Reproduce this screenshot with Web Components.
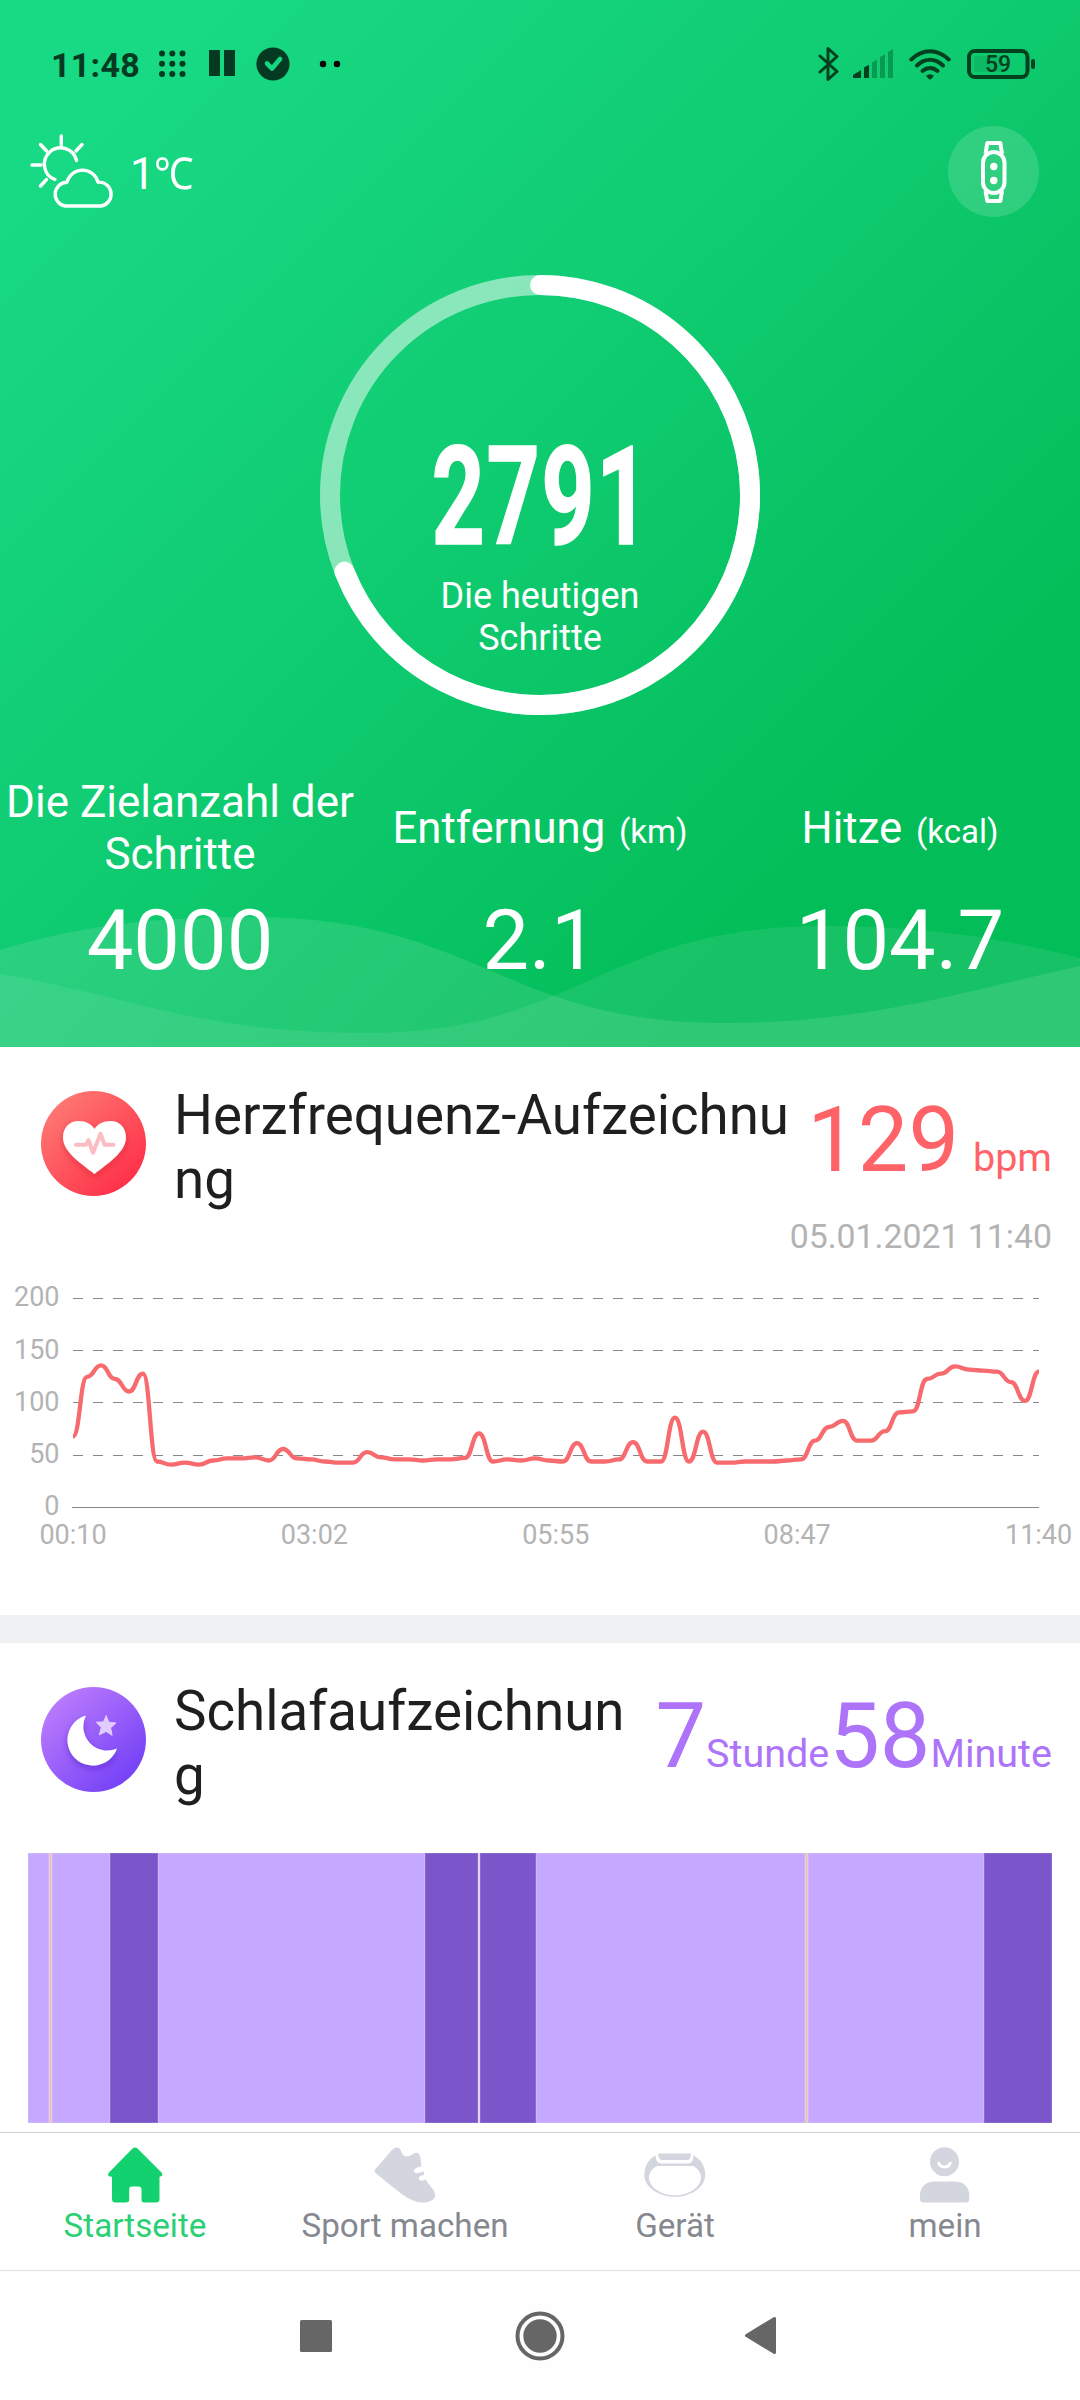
<!DOCTYPE html>
<html lang="de">
<head>
<meta charset="utf-8">
<title>Startseite</title>
<style>
  body { margin: 0; background: #fff; font-family: Roboto, "Noto Sans", sans-serif; width: 1080px; height: 2400px; overflow: hidden; }
</style>
</head>
<body>
<fitness-app></fitness-app>
<script>
const define = (name, html, setup) => customElements.define(name, class extends HTMLElement {
  connectedCallback() {
    if (this.shadowRoot) return;
    const t = document.createElement('template');
    t.innerHTML = typeof html === 'function' ? html(this) : html;
    this.attachShadow({ mode: 'open' }).append(t.content.cloneNode(true));
    if (setup) setup(this);
  }
});

const ICONS = {
  grid: [28, 28, `<g fill="#043a21">${[3.5,13.7,24].map(y => [3,13.3,23.5].map(x => `<circle cx="${x}" cy="${y}" r="3"/>`).join('')).join('')}</g>`],
  pause: [26, 26, `<path fill="#043a21" d="M0 0h11v26H0zM15 0h11v26H15z"/>`],
  check: [34, 34, `<circle cx="17" cy="17" r="16.6" fill="#043a21"/><path d="M11 16.5l5 5 8-9.5" fill="none" stroke="#17d682" stroke-width="4.6" stroke-linecap="round" stroke-linejoin="round"/>`],
  dots: [22, 8, `<circle cx="4" cy="4" r="3.2"/><circle cx="18" cy="4" r="3.2"/>`],
  bluetooth: [22, 36, `<path d="M2 10l17 15.5-9 8V2.500l9 8L2 26" fill="none" stroke="#03401f" stroke-width="3" stroke-linejoin="round" stroke-linecap="round"/>`],
  signal: [40, 30, `<path fill="#03401f" d="M0 26l8-5v8H0zM11 18.500l5-2.800V29h-5z"/><path fill="#089a50" d="M19 13.500l5-2.800V29h-5zM27 8l5-2.800V29h-5zM35 3l5-3v29h-5z"/>`],
  wifi: [42, 31, `<g fill="none" stroke="#03401f" stroke-width="4" stroke-linecap="round"><path d="M2.300 10.500Q11 2.300 21 2.300t18.700 8.200"/><path d="M8 16.500Q14 10.800 21 10.800t13 5.700"/><path d="M13.500 22Q17 19 21 19t7.500 3"/></g><path fill="#03401f" d="M17 26.800q4-3 8 0l-2.500 3q-1.500 1.200-3 0z"/>`],
  battery: [69, 30, `<rect x="2" y="2" width="58.500" height="26" rx="6" fill="none" stroke="#03401f" stroke-width="4"/><rect x="7" y="7" width="29" height="16" rx="2.500" fill="#03401f" opacity=".12"/><rect x="64" y="10" width="4" height="10" rx="2" fill="#03401f"/><text x="31" y="23.300" text-anchor="middle" font-size="23" font-weight="500" fill="#03401f" font-family="Roboto, sans-serif">59</text>`],
  weather: [84, 76, `<g fill="none" stroke="#fff" stroke-width="3.400" stroke-linecap="round" stroke-linejoin="round"><path d="M31.300 2v9M10.500 10.500l6 6.500M52 10.500l-6 6.500M2 31h9M10.500 52l6-6.500"/><path d="M46.500 26.500A16.300 16.300 0 1 0 25 45.500"/><path d="M37 48.200A16 16 0 0 1 68 48.200A12 12 0 0 1 71 72H35A12 12 0 0 1 37 48.200Z"/></g>`],
  watch: [91, 91, `<circle cx="45.500" cy="45.500" r="45.500" fill="#fff" opacity=".15"/><g fill="none" stroke="#fff" stroke-width="4" stroke-linejoin="round"><rect x="35" y="26" width="21.500" height="41" rx="10.750"/><path d="M37.500 28l1.800-11h13l1.800 11M37.500 65l1.800 10h13l1.800-10"/></g><circle cx="45.800" cy="40.500" r="3.700" fill="#fff"/><circle cx="45.800" cy="54.500" r="3.700" fill="#fff"/>`],
  heart: [105, 105, `<defs><linearGradient id="h" x1=".1" y1=".1" x2=".85" y2=".9"><stop offset="0" stop-color="#fe7a74"/><stop offset="1" stop-color="#ff2f48"/></linearGradient><filter id="s" x="-30%" y="-30%" width="160%" height="160%"><feDropShadow dx="0" dy="3" stdDeviation="3" flood-color="#c9152c" flood-opacity=".4"/></filter></defs><circle cx="52.500" cy="52.500" r="52.500" fill="url(#h)"/><path filter="url(#s)" fill="#fff" d="M53.500 83C41 73 22 61 22 46.500C22 36 29 30 37.500 30C45 30 50.500 33 53.500 38C56.500 33 62 30 69.500 30C78 30 85 36 85 46.500C85 61 66 73 53.500 83Z"/><path d="M35 53.700h10l2.500-4.500 4.500 12.500 7.500-19 4 11h9" fill="none" stroke="#fbbcc2" stroke-width="4" stroke-linecap="round" stroke-linejoin="round"/>`],
  moon: [105, 105, `<defs><linearGradient id="m" x1=".1" y1=".1" x2=".85" y2=".9"><stop offset="0" stop-color="#bd7dfd"/><stop offset="1" stop-color="#7340f6"/></linearGradient><filter id="s" x="-30%" y="-30%" width="160%" height="160%"><feDropShadow dx="0" dy="3" stdDeviation="3" flood-color="#4a1ec0" flood-opacity=".45"/></filter></defs><circle cx="52.500" cy="52.500" r="52.500" fill="url(#m)"/><path filter="url(#s)" fill="#fff" d="M45 28.500A25.500 25.500 0 1 0 76 61.500A24 24 0 0 1 45 28.500Z"/><path fill="#e2ccff" stroke="#e2ccff" stroke-width="1" stroke-linejoin="round" d="M65.200 28.500l2.600 6.700 7.200.800-5.400 4.800 1.500 7.500-6-3.900-6.800 3.400 2-7.200-5-5.400 7.200-.300z"/>`],
  home: [56, 56, `<path fill="#12d16e" d="M25.500 1.500Q28 -.5 30.500 1.500L54.500 25.500Q57 29.500 52.500 29.700V52Q52.500 55.500 49 55.500H37.500Q34.500 55.500 34.500 53V42.500Q34.500 39.500 31.500 39.500H25Q22.200 39.500 22.200 42.500V52.500Q22.200 55.500 19 55.500H8.500Q5 55.500 5 52V29.700Q-1 29.500 2 25.500Z"/>`],
  shoe: [62, 56, `<path fill="#d3d6de" d="M1 22.500L17.500 3.500Q22 -1.500 26 2C28 5 27.500 9 33 9.500C38 9.500 40 4 44.500 6.500C47 9 46.500 14 47.500 19.300L42 21Q39 22.500 40.300 25Q41.500 26.700 44 26L49.500 24.200L50.300 27.700L46.500 29Q43.800 30.500 45 32.600Q46.200 34.300 48.500 33.500L52 32.500C54 38 61 42 61.300 48.500C60.500 55 50 57 42 54.500C30 51 18 39 1.500 26Q0 24.500 1 22.500Z"/>`],
  band: [62, 44, `<path fill="#d3d6de" fill-rule="evenodd" d="M11.500 2.500Q12 10.500 17 10.500H44Q49 10.500 49.500 2.500C57 6 61.300 14 61.300 22C61 35 46 43.800 31 43.800C16 43.800 .500 35 .300 22C.300 14 4.500 6 11.500 2.500ZM13 13C8 16 5 19 5 25C6 36 19 42.300 31 42.300C43 42.300 56 36 57 25C57 19 54 16 49.500 13Z"/><path fill="#d3d6de" d="M14 .500H47Q47 7 43.500 7H18Q14.500 7 14 .500Z"/>`],
  person: [50, 56, `<circle cx="24.500" cy="14.700" r="14.500" fill="#d3d6de"/><path d="M18.500 15q1 5 6 5t6-5" fill="none" stroke="#fff" stroke-width="3"/><path fill="#d3d6de" d="M0 52V47Q2 34.500 15 34.500H34.500Q47.500 34.500 49.300 47V52Q49.300 55.500 46 55.500H3.500Q0 55.500 0 52Z"/>`],
  recents: [32, 32, `<rect width="32" height="32" rx="1.500" fill="#666"/>`],
  homekey: [50, 50, `<circle cx="25" cy="25" r="22.500" fill="none" stroke="#666" stroke-width="4"/><circle cx="25" cy="25" r="16.700" fill="#666"/>`],
  back: [32, 37, `<path d="M1.500 18.500L29.500 1.500V35.500Z" fill="#666" stroke="#666" stroke-width="3" stroke-linejoin="round"/>`],
};
define('app-icon', el => {
  const [w, h, body] = ICONS[el.getAttribute('name')];
  return `<style>:host{display:block;flex:none;width:${w}px;height:${h}px}svg{display:block}</style><svg width="${w}" height="${h}" viewBox="0 0 ${w} ${h}">${body}</svg>`;
});

define('status-bar', `<style>
  :host{display:flex;justify-content:space-between;height:110px;padding:18px 44px 0 51px;box-sizing:border-box}
  div{display:flex;align-items:center;height:92px}
  time{font-size:34px;font-weight:700;color:#043a21;width:91px;letter-spacing:.3px;padding-top:2px;margin-right:17px}
</style>
<div><time>11:48</time><app-icon name="grid" style="margin-right:22px"></app-icon><app-icon name="pause" style="margin:-2px 21px 0 0"></app-icon><app-icon name="check" style="margin-right:29px"></app-icon><app-icon name="dots"></app-icon></div>
<div><app-icon name="bluetooth" style="margin-right:13px"></app-icon><app-icon name="signal" style="margin-right:16px"></app-icon><app-icon name="wifi" style="margin-right:16px"></app-icon><app-icon name="battery"></app-icon></div>`);

define('weather-row', `<style>
  :host{display:flex;height:165px;padding:0 41px 0 30px;box-sizing:border-box;color:#fff}
  app-icon[name=weather]{margin-top:24px}
  .t{display:flex;font-size:44px;margin:38px auto 0 16px;line-height:52px}
  .u{transform:scaleX(.9);transform-origin:0 0;margin-left:-1px}
  app-icon[name=watch]{margin-top:16px}
</style><app-icon name="weather"></app-icon><div class="t"><span><slot></slot></span><span class="u"><slot name="unit"></slot></span></div><app-icon name="watch"></app-icon>`);

define('step-ring', `<style>
  :host{display:grid;width:440px;height:440px;margin:0 auto;color:#fff}
  svg,div{grid-area:1/1}
  div{display:flex;flex-direction:column;align-items:center;padding-top:153px}
  b{font-family:Roboto,sans-serif;font-size:137px;line-height:138px;height:147px;letter-spacing:2px;margin-left:2px;transform:scaleX(.68);-webkit-text-stroke:1.500px #fff}
  span{font-size:36px;line-height:42px;width:260px;text-align:center}
</style>
<svg width="440" height="440"><circle cx="220" cy="220" r="210" fill="none" stroke="#fff" stroke-opacity=".5" stroke-width="20"/>
<path d="M220 10A210 210 0 1 1 24.500 296.600" fill="none" stroke="#fff" stroke-width="20" stroke-linecap="round"/></svg>
<div><b><slot name="count"></slot></b><span><slot></slot></span></div>`);

define('stat-cell', `<style>
  :host{display:flex;flex-direction:column;align-items:center;flex:1;color:#fff;text-align:center}
  .l{height:103px;display:flex;align-items:center;font-size:44px;line-height:51.600px}
  .v{font-size:83px;line-height:98px;margin-top:12px}
  :host([single]) .l{padding-top:4px;height:99px;font-size:43.700px}
</style><div class="l"><span><slot></slot></span></div><div class="v"><slot name="value"></slot></div>`);

define('hero-panel', `<style>
  :host{display:grid;height:1047px;background:linear-gradient(135deg,#18d984 10%,#10cc72 44%,#03bd58 80%)}
  svg,main{grid-area:1/1}
  svg{align-self:end}
  section{display:flex;margin-top:62px}
  small{font-size:33px;margin-left:3px}
</style>
<svg width="1080" height="147" viewBox="0 900 1080 147">
  <path fill="#fff" fill-opacity=".11" d="M0 950C80 925 160 917 248 917C480 917 500 1023 726 1023C870 1023 970 990 1080 966V1047H0Z"/>
  <path fill="#fff" fill-opacity=".08" d="M0 974C130 996 200 1033 365 1033C580 1033 600 926 826 926C930 926 1010 940 1080 958V1047H0Z"/>
</svg>
<main>
  <status-bar></status-bar>
  <weather-row>1<span slot="unit">℃</span></weather-row>
  <step-ring><span slot="count">2791</span>Die heutigen Schritte</step-ring>
  <section>
    <stat-cell>Die Zielanzahl der Schritte<span slot="value">4000</span></stat-cell>
    <stat-cell single>Entfernung <small>(km)</small><span slot="value">2.1</span></stat-cell>
    <stat-cell single>Hitze <small>(kcal)</small><span slot="value">104.7</span></stat-cell>
  </section>
</main>`);

define('metric-card', el => `<style>
  :host{display:block;padding-top:36px;box-sizing:border-box;background:#fff}
  header{display:flex;padding:0 28px 0 41px;height:129px}
  app-icon{margin:8px 24px 0 0}
  h2{font-weight:400;font-size:54.700px;line-height:64px;margin:0;padding:0 12px 0 4px;color:#1f1f1f;flex:1;min-width:0;word-break:break-all}
  .v{color:${el.getAttribute('color')};white-space:nowrap;margin-top:5px;font-size:90px;line-height:106px}
</style><header><app-icon name="${el.getAttribute('icon')}"></app-icon><h2>${el.getAttribute('heading')}</h2><div class="v"><slot name="value"></slot></div></header><slot></slot>`);

define('heart-chart', () => {
  const v = [68,125,136,123,111,128,44,41,43,41,45,47,47,48,45,56,47,46,44,43,43,53,48,46,46,45,46,46,47.5,71,44,46,45,47,45,44,61.5,44,44,46,62.5,44,44,86,44,72.5,43,43,44,44,44,45,46,64,77,83,64,64,73,91,92,123,128,135,132,131,130,120,102,130];
  const X = i => 73 + i * 14, Y = n => +(251.5 - n * 1.045).toFixed(1);
  let d = `M73 ${Y(v[0])}`;
  for (let i = 1; i < v.length; i++) { const m = X(i) - 7; d += `C${m} ${Y(v[i-1])} ${m} ${Y(v[i])} ${X(i)} ${Y(v[i])}`; }
  const rows = [[200,42.5,49.7],[150,94.5,102.5],[100,146.5,155],[50,199.5,207],[0,251.5,259]];
  return `<style>:host{display:block;height:359px}svg{display:block;font:27px Roboto,sans-serif}text{fill:#b3b3b3}</style>
  <svg width="1080" height="359"><clipPath id="c"><rect x="73" y="0" width="966" height="300"/></clipPath>
  ${rows.map(([n,y,b]) => `<line x1="${n?73:72}" x2="1039" y1="${y}" y2="${y}" stroke="#888" ${n?'stroke-dasharray="10 10"':''}/><text x="59.500" y="${b}" text-anchor="end">${n}</text>`).join('')}
  <path clip-path="url(#c)" d="${d}" fill="none" stroke="#f76a6d" stroke-width="4.300"/>
  ${['00:10','03:02','05:55','08:47','11:40'].map((t,i) => `<text x="${73+i*241.4}" y="288" text-anchor="middle">${t}</text>`).join('')}</svg>`;
});

define('sleep-chart', () => {
  const segs = [['l',21],['o',3],['l',57.5],['d',48.5],['l',267],['d',52.5],['g',2],['d',56],['l',269.5],['o',3],['l',175.5],['d',68]];
  return `<style>:host{display:flex;height:270px;margin:45px 28px 0}
  i{box-sizing:border-box;flex:none}.l{background:#c5a8ff;border:1px solid #cdb5fb}.d{background:#7a56ca;border:1px solid #8a6bd0}.g{background:#e3d4fb}
  .o{background:#fcbf98;border:solid #e4cbe8;border-width:0 1px}</style>` + segs.map(([c,w]) => `<i class="${c}" style="width:${w}px"></i>`).join('');
});

define('tab-item', el => `<style>
  :host{display:flex;flex-direction:column;align-items:center;flex:1;color:#85888f;font-size:33.200px;line-height:39px}
  :host([active]){color:#2bcf74}
  .i{height:57px;display:flex;align-items:center;margin:13px 0 3px}
</style><div class="i"><app-icon name="${el.getAttribute('icon')}"></app-icon></div><slot></slot>`);

define('tab-bar', `<style>:host{display:flex;height:139px;box-sizing:border-box;background:#fff;border-top:1px solid #d0d0d0;border-bottom:1px solid #e0e0e0}</style>
<tab-item icon="home" active>Startseite</tab-item><tab-item icon="shoe">Sport machen</tab-item><tab-item icon="band">Gerät</tab-item><tab-item icon="person">mein</tab-item>`);

define('system-nav', `<style>:host{display:flex;flex:1;align-items:center;background:#fefefe;padding-left:300px}
app-icon[name=homekey]{margin:0 180px 0 182.500px}</style>
<app-icon name="recents"></app-icon><app-icon name="homekey"></app-icon><app-icon name="back"></app-icon>`);

define('fitness-app', `<style>
  :host{display:flex;flex-direction:column;width:1080px;height:2400px}
  .date{font-size:33.800px;line-height:39px;color:#b3b3b3;text-align:right;padding:5px 28px 0 0}
  small{font-size:39.500px}
  .heart{height:568px}.gap{height:28px;background:#eff1f3}.sleep{height:489px}
  .val{display:inline-flex;align-items:baseline}
</style>
<hero-panel></hero-panel>
<metric-card class="heart" icon="heart" heading="Herzfrequenz-Aufzeichnung" color="#ff6367"><span slot="value" class="val">129<small style="margin-left:14px">bpm</small></span><div class="date">05.01.2021 11:40</div><heart-chart></heart-chart></metric-card>
<div class="gap"></div>
<metric-card class="sleep" icon="moon" heading="Schlafaufzeichnung" color="#ad74fa"><span slot="value" class="val">7<small>Stunde</small>58<small>Minute</small></span><sleep-chart></sleep-chart></metric-card>
<tab-bar></tab-bar>
<system-nav></system-nav>`);
</script>
</body>
</html>
